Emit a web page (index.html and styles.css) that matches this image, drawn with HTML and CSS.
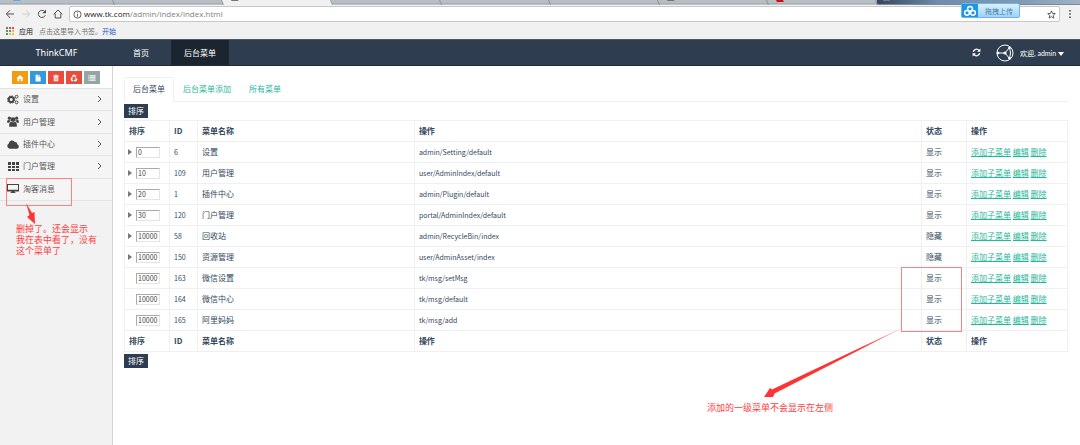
FILE: index.html
```html
<!DOCTYPE html>
<html lang="zh-CN">

<head>
    <meta charset="UTF-8">
    <meta name="viewport" content="width=device-width, initial-scale=1.0">
    <title>ThinkCMF</title>
    <link rel="stylesheet" href="styles.css">
</head>

<body>
    <!-- Browser window -->
    <header class="browser">
        <div class="tab-strip">
            <span class="browser-tab"><i class="favicon blue"></i></span>
            <span class="browser-tab"></span>
            <span class="browser-tab current"><i class="favicon"></i></span>
            <span class="browser-tab"></span>
            <span class="browser-tab"></span>
            <span class="browser-tab"></span>
            <span class="browser-tab"><i class="favicon"></i></span>
            <span class="browser-tab"><i class="favicon red"></i></span>
            <span class="strip-end"><i class="favicon"></i></span>
        </div>
        <div class="toolbar">
            <button class="tool" aria-label="后退"><svg viewBox="0 0 10 10"><path d="M9 5H1.5M5 1.3L1.3 5L5 8.7" /></svg></button>
            <button class="tool disabled" aria-label="前进"><svg viewBox="0 0 10 10"><path d="M1 5h7.5M5 1.3L8.7 5L5 8.7" /></svg></button>
            <button class="tool" aria-label="刷新"><svg viewBox="0 0 10 10"><path d="M8.3 6.2A3.6 3.6 0 1 1 7.6 2.5" /><path class="solid" d="M9 .6V4.300H5.300z" /></svg></button>
            <button class="tool" aria-label="主页"><svg viewBox="0 0 10 10"><path d="M.7 5.300L5 1L9.300 5.300M2.200 4.500V9H7.800V4.500" /></svg></button>
            <div class="address">
                <svg class="info" viewBox="0 0 10 10"><circle cx="5" cy="5" r="4" /><path d="M5 4.500V7.500M5 2.500v1" /></svg>
                <div class="url"><b>www.tk.com</b>/admin/index/index.html</div>
                <button class="star" aria-label="收藏"><svg viewBox="0 0 10 10"><path d="M5 1L6.200 3.800L9.200 4L6.900 6L7.600 9L5 7.400L2.400 9L3.100 6L.8 4L3.800 3.800z" /></svg></button>
            </div>
            <button class="tool more" aria-label="更多"><svg viewBox="0 0 10 10"><path class="solid" d="M4.200 1h1.600v1.600H4.200zM4.200 4.200h1.600v1.600H4.200zM4.200 7.400h1.600V9H4.200z" /></svg></button>
        </div>
        <div class="bookmarks">
            <svg class="apps" viewBox="0 0 8 8">
                <path fill="#e8453c" d="M0 0h2v2H0zM3 0h2v2H3zM6 0h2v2H6z" />
                <path fill="#3aa757" d="M0 3h2v2H0z" />
                <path fill="#4285f4" d="M3 3h2v2H3z" />
                <path fill="#f9bb2d" d="M6 3h2v2H6zM3 6h2v2H3zM6 6h2v2H6z" />
                <path fill="#3aa757" d="M0 6h2v2H0z" />
            </svg>
            <span class="apps-label">应用</span>
            <span class="hint">点击这里导入书签。</span>
            <a href="#">开始</a>
        </div>
        <button class="upload">
            <span class="upload-icon"><svg viewBox="0 0 14 12"><circle cx="7" cy="3.800" r="2.400" /><circle cx="4" cy="7.800" r="2.400" /><circle cx="10" cy="7.800" r="2.400" /></svg></span>
            <span class="upload-text">拖拽上传</span>
        </button>
    </header>

    <nav class="navbar">
        <a class="brand" href="#">ThinkCMF</a>
        <a class="nav-link" href="#">首页</a>
        <a class="nav-link active" href="#">后台菜单</a>
        <div class="user-area">
            <button class="refresh" aria-label="刷新"><svg viewBox="0 0 10 10"><path d="M1.500 4.300A3.500 3.500 0 0 1 7.800 2.800M8.500 5.700A3.500 3.500 0 0 1 2.200 7.200" /><path class="solid" d="M9.300 .6V4.200H5.700zM.7 9.400V5.800H4.300z" /></svg></button>
            <svg class="avatar" viewBox="0 0 18 18">
                <circle cx="9" cy="9" r="8" />
                <path d="M2 9H9L13.500 3.500M9 9L13.500 14.500M13.500 3.500Q15.500 9 13.500 14.500" />
                <circle class="dot" cx="9" cy="9" r="1.600" />
                <circle class="dot" cx="13.500" cy="3.800" r="1.300" />
                <circle class="dot" cx="13.500" cy="14.200" r="1.300" />
                <circle class="dot" cx="2" cy="9" r="1.300" />
            </svg>
            <a class="welcome" href="#">欢迎, admin <i class="caret"></i></a>
        </div>
    </nav>

    <div class="page">
        <aside class="sidebar">
            <div class="shortcuts">
                <button class="orange" aria-label="首页"><svg viewBox="0 0 10 10"><path d="M5 1.200L9.500 5.200H8.300V9H5.900V6.200H4.100V9H1.700V5.200H.5z" /></svg></button>
                <button class="blue" aria-label="文件"><svg viewBox="0 0 10 10"><path d="M2 .8H5.600V3.600H8.300V9.300H2zM6.200 .8L8.300 3H6.200z" /></svg></button>
                <button class="red" aria-label="删除"><svg viewBox="0 0 10 10"><path fill-rule="evenodd" d="M1.500 2H3.700L4 1H6L6.300 2H8.500V3H1.500zM2.200 3.500H7.800V9.200H2.200zM3.500 4.500V8.200H4V4.500zM4.800 4.500V8.200H5.300V4.500zM6 4.500V8.200H6.500V4.500z" /></svg></button>
                <button class="red" aria-label="回收站"><svg viewBox="0 0 10 10"><path d="M3.500 1H6.300L7.300 2.500L8 2.100L7.400 4.400L5.200 3.800L6 3.300L5.200 2.200L4.100 4L2.600 3.100zM7.800 4.700L9.300 7L8 9H6V9.600L4.600 8.100L6 6.600V7.300H7.300L6.500 5.500zM.8 4.400L3 4L3.600 6.200L2.900 5.800L2.500 7.300H4V9H2L.7 7L1.400 5z" /></svg></button>
                <button class="gray" aria-label="列表"><svg viewBox="0 0 10 10"><path d="M.5 1.500H2V3H.5zM2.600 1.500H9.500V3H2.600zM.5 4.200H2V5.700H.5zM2.600 4.200H9.500V5.700H2.600zM.5 6.900H2V8.400H.5zM2.600 6.900H9.500V8.400H2.600z" /></svg></button>
            </div>
            <ul class="side-menu">
                <li><a href="#">
                    <svg class="icon" viewBox="0 0 12 11"><circle class="gear" cx="4.200" cy="5.600" r="2.500" /><circle class="teeth" cx="4.200" cy="5.600" r="3.700" /><circle class="small-gear" cx="9.600" cy="2.700" r="1.400" /><circle class="small-gear" cx="9.600" cy="8.400" r="1.400" /></svg>
                    <span>设置</span><svg class="arrow" viewBox="0 0 5 8"><path d="M1 1L4 4L1 7" /></svg></a></li>
                <li><a href="#">
                    <svg class="icon" viewBox="0 0 12 11"><circle cx="6" cy="3.600" r="2.300" /><circle cx="2.400" cy="2.200" r="1.600" /><circle cx="9.600" cy="2.200" r="1.600" /><path d="M2.200 10.700V8.500Q2.200 6 4.200 5.700Q6 7 7.800 5.700Q9.800 6 9.800 8.500V10.700zM.1 6.800Q0 3.800 1.300 3.700Q2.500 4.500 3.600 4.200L3.900 5Q2.500 5.400 2 6.800zM11.900 6.800Q12 3.800 10.700 3.700Q9.500 4.500 8.400 4.200L8.100 5Q9.500 5.400 10 6.800z" /></svg>
                    <span>用户管理</span><svg class="arrow" viewBox="0 0 5 8"><path d="M1 1L4 4L1 7" /></svg></a></li>
                <li><a href="#">
                    <svg class="icon" viewBox="0 0 12 11"><path d="M2.800 9.800A2.900 2.900 0 0 1 1.800 4.400A3.300 3.300 0 0 1 7.900 3A2 2 0 0 1 10.200 5.300A2.300 2.300 0 0 1 9.700 9.800z" /></svg>
                    <span>插件中心</span><svg class="arrow" viewBox="0 0 5 8"><path d="M1 1L4 4L1 7" /></svg></a></li>
                <li><a href="#">
                    <svg class="icon" viewBox="0 0 12 11"><path d="M1 1H4V4H1zM5 1H8V4H5zM9 1H12V4H9zM1 5H4V7H1zM5 5H8V7H5zM9 5H12V7H9zM1 8H4V10H1zM5 8H8V10H5zM9 8H12V10H9z" /></svg>
                    <span>门户管理</span><svg class="arrow" viewBox="0 0 5 8"><path d="M1 1L4 4L1 7" /></svg></a></li>
                <li><a href="#">
                    <svg class="icon" viewBox="0 0 12 11"><path fill-rule="evenodd" d="M0 1H12V8.500H7.500V9.300H8.500V10H3.500V9.300H4.500V8.500H0zM1 2V6.800H11V2z" /></svg>
                    <span>淘客消息</span></a></li>
            </ul>
            <!-- Sidebar note -->
            <div class="mark mark-menu"></div>
            <svg class="note-arrow" viewBox="0 0 12 22"><path d="M1 0L7 10L9.500 9L10 21L2 14L4.500 12z" /></svg>
            <p class="note note-menu">删掉了。还会显示<br>我在表中看了，没有<br>这个菜单了</p>
        </aside>

        <main class="content">
            <div class="tabs">
                <a class="tab active" href="#">后台菜单</a>
                <a class="tab" href="#">后台菜单添加</a>
                <a class="tab" href="#">所有菜单</a>
            </div>
            <button class="sort-btn">排序</button>
            <table class="menu-table">
                <colgroup>
                    <col class="col-sort">
                    <col class="col-id">
                    <col class="col-name">
                    <col>
                    <col class="col-status">
                    <col class="col-links">
                </colgroup>
                <thead>
                    <tr><th>排序</th><th>ID</th><th>菜单名称</th><th>操作</th><th>状态</th><th>操作</th></tr>
                </thead>
                <tbody>
                    <tr>
                        <td><div class="order"><i class="expander"></i><input type="text" value="0" aria-label="排序 设置"></div></td>
                        <td class="latin">6</td><td>设置</td><td class="latin">admin/Setting/default</td><td>显示</td>
                        <td class="links"><a href="#">添加子菜单</a> <a href="#">编辑</a> <a href="#">删除</a></td>
                    </tr>
                    <tr>
                        <td><div class="order"><i class="expander"></i><input type="text" value="10" aria-label="排序 用户管理"></div></td>
                        <td class="latin">109</td><td>用户管理</td><td class="latin">user/AdminIndex/default</td><td>显示</td>
                        <td class="links"><a href="#">添加子菜单</a> <a href="#">编辑</a> <a href="#">删除</a></td>
                    </tr>
                    <tr>
                        <td><div class="order"><i class="expander"></i><input type="text" value="20" aria-label="排序 插件中心"></div></td>
                        <td class="latin">1</td><td>插件中心</td><td class="latin">admin/Plugin/default</td><td>显示</td>
                        <td class="links"><a href="#">添加子菜单</a> <a href="#">编辑</a> <a href="#">删除</a></td>
                    </tr>
                    <tr>
                        <td><div class="order"><i class="expander"></i><input type="text" value="30" aria-label="排序 门户管理"></div></td>
                        <td class="latin">120</td><td>门户管理</td><td class="latin">portal/AdminIndex/default</td><td>显示</td>
                        <td class="links"><a href="#">添加子菜单</a> <a href="#">编辑</a> <a href="#">删除</a></td>
                    </tr>
                    <tr>
                        <td><div class="order"><i class="expander"></i><input type="text" value="10000" aria-label="排序 回收站"></div></td>
                        <td class="latin">58</td><td>回收站</td><td class="latin">admin/RecycleBin/index</td><td>隐藏</td>
                        <td class="links"><a href="#">添加子菜单</a> <a href="#">编辑</a> <a href="#">删除</a></td>
                    </tr>
                    <tr>
                        <td><div class="order"><i class="expander"></i><input type="text" value="10000" aria-label="排序 资源管理"></div></td>
                        <td class="latin">150</td><td>资源管理</td><td class="latin">user/AdminAsset/index</td><td>隐藏</td>
                        <td class="links"><a href="#">添加子菜单</a> <a href="#">编辑</a> <a href="#">删除</a></td>
                    </tr>
                    <tr>
                        <td><div class="order"><input type="text" value="10000" aria-label="排序 微信设置"></div></td>
                        <td class="latin">163</td><td>微信设置</td><td class="latin">tk/msg/setMsg</td><td>显示</td>
                        <td class="links"><a href="#">添加子菜单</a> <a href="#">编辑</a> <a href="#">删除</a></td>
                    </tr>
                    <tr>
                        <td><div class="order"><input type="text" value="10000" aria-label="排序 微信中心"></div></td>
                        <td class="latin">164</td><td>微信中心</td><td class="latin">tk/msg/default</td><td>显示</td>
                        <td class="links"><a href="#">添加子菜单</a> <a href="#">编辑</a> <a href="#">删除</a></td>
                    </tr>
                    <tr>
                        <td><div class="order"><input type="text" value="10000" aria-label="排序 阿里妈妈"></div></td>
                        <td class="latin">165</td><td>阿里妈妈</td><td class="latin">tk/msg/add</td><td>显示</td>
                        <td class="links"><a href="#">添加子菜单</a> <a href="#">编辑</a> <a href="#">删除</a></td>
                    </tr>
                </tbody>
                <tfoot>
                    <tr><th>排序</th><th>ID</th><th>菜单名称</th><th>操作</th><th>状态</th><th>操作</th></tr>
                </tfoot>
            </table>
            <button class="sort-btn">排序</button>

            <!-- Table note -->
            <div class="mark mark-status"></div>
            <svg class="long-arrow" viewBox="0 0 144 72">
                <defs>
                    <linearGradient id="fade" x1="1" x2="0">
                        <stop offset="0" stop-color="#f33" stop-opacity="0.3" />
                        <stop offset="0.3" stop-color="#f33" />
                    </linearGradient>
                </defs>
                <path fill="url(#fade)" d="M143 0L11.500 67.500L10 71L1 71L7 62L9 63.500z" />
            </svg>
            <p class="note note-status">添加的一级菜单不会显示在左侧</p>
        </main>
    </div>
</body>

</html>
```
FILE: styles.css
```css
* {
    margin: 0;
    padding: 0;
    box-sizing: border-box;
}

:root {
    --navy: #2e3e50;
    --navy-dark: #1b252f;
    --green: #1fb89a;
    --line: #eef1f2;
    --mark: #ff3333;
}

body {
    min-height: 100vh;
    display: flex;
    flex-direction: column;
    font-family: "Noto Sans CJK SC", sans-serif;
    font-size: 8px;
    line-height: 12px;
    color: #34495e;
    background-color: #fff;
}

a {
    color: inherit;
    text-decoration: none;
}

button {
    border: none;
    background: none;
    color: inherit;
    font: inherit;
    cursor: pointer;
}

svg {
    display: block;
}

/* Browser window */
.browser {
    position: relative;
    background-color: #f1f1f1;
}

.tab-strip {
    display: flex;
    height: 5px;
    padding-left: 5px;
    background: linear-gradient(#b6bfc6 0 3px, #999da1 4px, #e8e8e8 5px);
    overflow: hidden;
}

.browser-tab {
    width: 109px;
    padding-left: 9px;
    border-right: 1px solid #8e9499;
    transform: skewX(20deg);
}

.browser-tab.current {
    background-color: #f1f1f1;
}

.strip-end {
    flex: 1;
    padding-left: 6px;
    background: linear-gradient(90deg, #33475d, #6f8caa 30%, #7f9ab6 70%, #9fb2c4);
    border-bottom: 1px solid #7d8994;
}

.favicon {
    display: block;
    width: 7px;
    height: 1px;
    background-color: #777;
}

.favicon.blue {
    background-color: #5aa5ee;
}

.favicon.red {
    height: 2px;
    background-color: #c9141e;
}

.toolbar {
    display: flex;
    align-items: center;
    height: 18px;
    padding-left: 5px;
}

.tool {
    width: 10px;
    height: 10px;
    margin-right: 6px;
}

.tool svg,
.star svg,
.info {
    width: 100%;
    fill: none;
    stroke: #505050;
    stroke-width: 1;
}

.tool .solid {
    fill: #505050;
    stroke: none;
}

.tool.disabled svg {
    stroke: #ccc;
}

.tool.more {
    margin: 0 5px;
}

.address {
    flex: 1;
    display: flex;
    align-items: center;
    height: 16px;
    padding: 0 3px;
    background-color: #fff;
    border: 1px solid #c8c8c8;
    border-radius: 2px;
}

.info {
    width: 9px;
    height: 9px;
}

.url {
    flex: 1;
    padding-left: 2px;
    font-family: "Open Sans", sans-serif;
    color: #808080;
}

.url b {
    font-weight: normal;
    color: #222;
}

.star {
    width: 9px;
    height: 9px;
}

.bookmarks {
    display: flex;
    align-items: center;
    height: 16px;
    padding-left: 6px;
    font-size: 7px;
    color: #777;
}

.apps {
    width: 8px;
    height: 8px;
    margin-right: 5px;
}

.apps-label {
    margin-right: 6px;
    color: #222;
}

.bookmarks a {
    color: #2a56d6;
}

/* Floating upload button */
.upload {
    position: absolute;
    top: 3px;
    right: 60px;
    display: flex;
    height: 15px;
    border: 1px solid #6db5e6;
    border-radius: 2px;
    background: linear-gradient(#d9f0ff, #9bd3fa);
    color: #4a7da8;
    font-size: 7px;
    line-height: 14px;
}

.upload-icon {
    display: flex;
    align-items: center;
    height: 13px;
    padding: 0 1px;
    background-color: #1b97ea;
}

.upload-icon svg {
    width: 14px;
    height: 12px;
    fill: none;
    stroke: #fff;
    stroke-width: 1.5;
}

.upload-text {
    padding: 0 6px 0 7px;
}

/* Navbar */
.navbar {
    display: flex;
    align-items: stretch;
    height: 27px;
    line-height: 26px;
    background-color: var(--navy);
    border-top: 1px solid #4b5663;
    border-bottom: 1px solid #1d2c3d;
    color: #fff;
}

.brand {
    width: 113px;
    text-align: center;
    font-family: "Noto Sans", sans-serif;
    font-size: 9px;
}

.nav-link {
    padding: 0 13px;
    margin-left: 7px;
}

.nav-link.active {
    margin-left: 9px;
    background-color: var(--navy-dark);
}

.user-area {
    display: flex;
    align-items: center;
    margin-left: auto;
    padding-right: 16px;
    font-family: Lato, "Noto Sans CJK SC", sans-serif;
    font-size: 7px;
}

.refresh {
    width: 9px;
    height: 9px;
    margin-right: 15px;
}

.refresh svg {
    fill: none;
    stroke: #fff;
    stroke-width: 1.5;
}

.refresh .solid {
    fill: #fff;
    stroke: none;
}

.avatar {
    width: 18px;
    height: 18px;
    margin-right: 6px;
    fill: none;
    stroke: #fff;
    stroke-width: 1;
}

.avatar .dot {
    fill: #fff;
    stroke: none;
}

.caret {
    display: inline-block;
    border: 3px solid transparent;
    border-top: 4px solid #fff;
    border-bottom: none;
    vertical-align: middle;
}

.page {
    flex: 1;
    display: flex;
}

/* Sidebar */
.sidebar {
    position: relative;
    width: 113px;
    background-color: #f2f2f2;
    border-right: 1px solid #d4d4d4;
}

.shortcuts {
    display: flex;
    justify-content: center;
    gap: 2px;
    padding: 5px 0 4px;
    background-color: #fff;
    border-bottom: 1px solid #e2e2e2;
}

.shortcuts button {
    display: flex;
    align-items: center;
    justify-content: center;
    width: 16px;
    height: 13px;
}

.shortcuts svg {
    width: 8px;
    height: 8px;
    fill: #fff;
}

.shortcuts .orange {
    background-color: #f39c12;
}

.shortcuts .blue {
    background-color: #3498db;
}

.shortcuts .red {
    background-color: #e74c3c;
}

.shortcuts .gray {
    background-color: #95a5a6;
}

.side-menu {
    display: flex;
    flex-direction: column;
    min-height: 112px;
    list-style: none;
}

.side-menu li {
    flex: 1;
    display: flex;
    background-color: #f5f5f5;
    border-bottom: 1px solid #e4e4e4;
}

.side-menu a {
    flex: 1;
    display: flex;
    align-items: center;
    padding: 0 10px 1px 7px;
    color: #585858;
}

.icon {
    width: 12px;
    height: 11px;
    margin-right: 4px;
    fill: #444;
}

.icon circle.gear {
    fill: none;
    stroke: #444;
    stroke-width: 2;
}

.icon circle.teeth {
    fill: none;
    stroke: #444;
    stroke-dasharray: 1.5 1.4;
}

.icon circle.small-gear {
    fill: none;
    stroke: #444;
    stroke-width: 1;
}

.arrow {
    width: 5px;
    height: 8px;
    margin-left: auto;
    fill: none;
    stroke: #555;
    stroke-width: 1;
}

/* Content */
.content {
    position: relative;
    flex: 1;
    padding: 11px 12px 0 11px;
}

.tabs {
    display: flex;
    margin-bottom: 2px;
    border-bottom: 1px solid var(--line);
}

.tab {
    padding: 5px 8px 6px;
    border: 1px solid transparent;
    border-bottom: none;
    color: var(--green);
}

.tab.active {
    margin-bottom: -1px;
    padding-bottom: 7px;
    border-color: var(--line);
    border-radius: 2px 2px 0 0;
    background-color: #fff;
    color: #34495e;
}

.sort-btn {
    display: block;
    height: 14px;
    padding: 0 4px;
    background-color: var(--navy);
    color: #fff;
}

.menu-table {
    width: 100%;
    margin: 2px 0;
    table-layout: fixed;
    border-collapse: collapse;
}

.menu-table th,
.menu-table td {
    height: 21px;
    padding: 0 4px;
    border: 1px solid var(--line);
    text-align: left;
    white-space: nowrap;
}

.menu-table .latin {
    font-size: 7px;
}

.col-sort,
.col-status {
    width: 45px;
}

.col-id {
    width: 28px;
}

.col-name {
    width: 23%;
}

.col-links {
    width: 101px;
}

.order {
    display: flex;
    align-items: center;
    justify-content: flex-end;
    gap: 4px;
    padding-right: 5px;
}

.expander {
    border: 3px solid transparent;
    border-left: 4px solid #777;
    border-right: none;
}

.order input {
    width: 24px;
    height: 11px;
    padding: 0 1px;
    border: 1px solid #e4e4e4;
    border-top-color: #aaa;
    border-left-color: #aaa;
    background-color: #fff;
    color: #444;
    font-family: inherit;
    font-size: 7px;
}

.links a {
    color: var(--green);
    text-decoration: underline;
}

/* Red notes drawn over the page */
.mark {
    position: absolute;
    border: 1px solid #ff8080;
    pointer-events: none;
}

.note {
    position: absolute;
    font-size: 9px;
    line-height: 11px;
    color: #ff4040;
    white-space: nowrap;
}

.mark-menu {
    top: 112px;
    left: 6px;
    width: 66px;
    height: 28px;
}

.note-arrow {
    position: absolute;
    top: 137px;
    left: 25px;
    width: 12px;
    height: 22px;
    fill: var(--mark);
}

.note-menu {
    top: 157px;
    left: 16px;
}

.mark-status {
    top: 201px;
    right: 118px;
    width: 61px;
    height: 65px;
}

.long-arrow {
    position: absolute;
    top: 260px;
    right: 173px;
    width: 144px;
    height: 72px;
}

.note-status {
    top: 336px;
    right: 247px;
}
```
